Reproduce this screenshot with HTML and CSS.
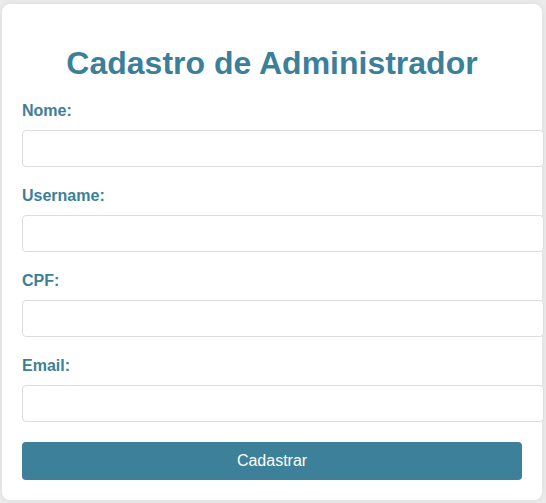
FILE: index.html
```html
<!DOCTYPE html>
<html lang="pt-BR">
<head>
<meta charset="utf-8">
<title>Cadastro de Administrador</title>
<link rel="stylesheet" href="styles.css">
</head>
<body>
  <div class="card">
    <h1 class="title">Cadastro de Administrador</h1>
    <form class="form">
      <div class="field">
        <label class="label" for="nome">Nome:</label>
        <input class="input" id="nome" type="text">
      </div>
      <div class="field">
        <label class="label" for="username">Username:</label>
        <input class="input" id="username" type="text">
      </div>
      <div class="field">
        <label class="label" for="cpf">CPF:</label>
        <input class="input" id="cpf" type="text">
      </div>
      <div class="field">
        <label class="label" for="email">Email:</label>
        <input class="input" id="email" type="email">
      </div>
      <button class="button" type="button">Cadastrar</button>
    </form>
  </div>
</body>
</html>
```

FILE: styles.css
```css
html, body {
  margin: 0;
  padding: 0;
}
body {
  font-family: "Liberation Sans", Arial, sans-serif;
  background: #ececec;
  min-height: 100vh;
  padding-right: 2px;
  box-sizing: border-box;
  display: flex;
  align-items: center;
  justify-content: center;
}
.card {
  background: #ffffff;
  width: 500px;
  padding: 20px;
  border-radius: 8px;
  box-shadow: 0 0 8px rgba(0, 0, 0, 0.08);
}
.title {
  color: #3c7f99;
  text-align: center;
  font-size: 32px;
  margin: 21px 0 20px;
}
.form {
  margin: 0;
}
.field {
  margin-bottom: 20px;
}
.label {
  display: block;
  color: #3c7f99;
  font-weight: bold;
  font-size: 16px;
  margin-bottom: 10px;
}
.input {
  display: block;
  width: 100%;
  padding: 10px;
  border: 1px solid #dddddd;
  border-radius: 4px;
  font-family: "Liberation Sans", Arial, sans-serif;
  font-size: 13.33px;
  margin: 0;
}
.button {
  display: block;
  width: 100%;
  padding: 10px;
  border: none;
  border-radius: 4px;
  background: #3d8099;
  color: #ffffff;
  font-family: "Liberation Sans", Arial, sans-serif;
  font-size: 16px;
}
```
